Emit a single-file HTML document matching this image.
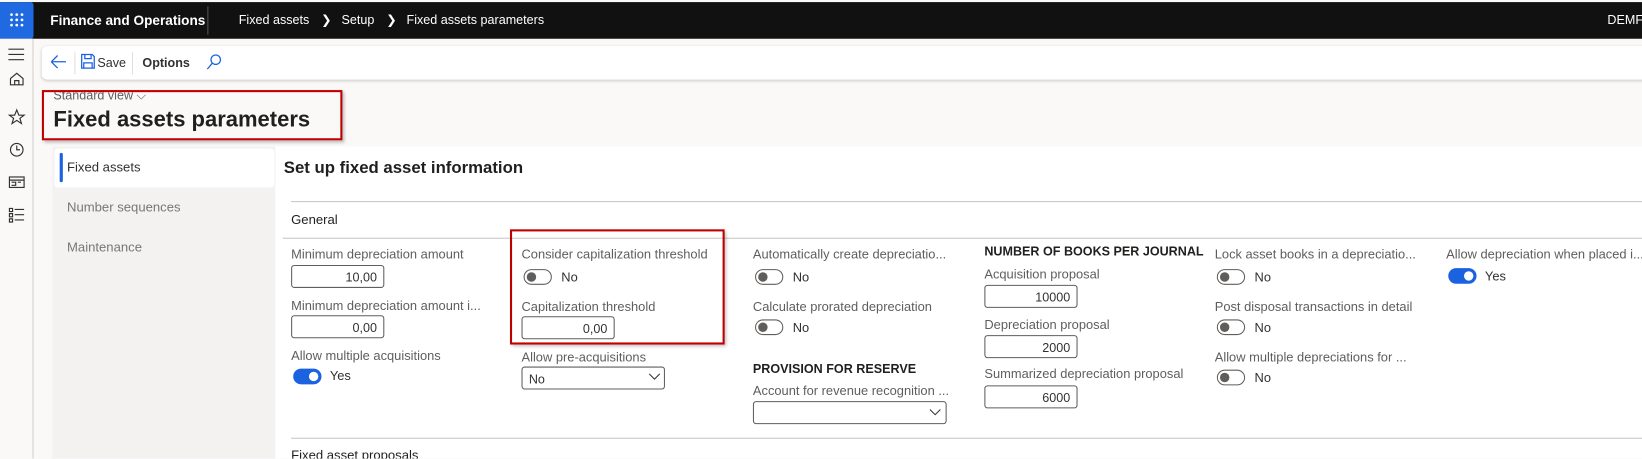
<!DOCTYPE html>
<html><head><meta charset="utf-8"><style>
*{margin:0;padding:0;box-sizing:border-box}
html,body{width:1642px;height:459px;overflow:hidden;background:#faf9f8;font-family:"Liberation Sans",sans-serif;color:#323130}
#s{position:absolute;left:0;top:0;width:1568px;height:438px;transform:scale(1.04719);transform-origin:0 0;overflow:hidden}
.a{position:absolute;white-space:nowrap}
.lbl{position:absolute;font-size:12.3px;color:#605e5c;white-space:nowrap}
.inp{position:absolute;height:22px;border:1px solid #605e5c;border-radius:3px;background:#fff;font-size:12px;text-align:right;padding:4px 6px 0 0;color:#323130}
.tg{position:absolute;width:27px;height:15px;border:1px solid #605e5c;border-radius:8px;background:#fff}
.tg:after{content:"";position:absolute;left:2px;top:2px;width:9px;height:9px;border-radius:50%;background:#605e5c}
.tg.on{background:#1a62e0;border-color:#1a62e0}
.tg.on:after{left:14px;background:#fff}
.tt{position:absolute;font-size:12.3px;color:#323130}
.line{position:absolute;height:1px;background:#c8c6c4}
</style></head><body><div id="s">
<div class="a" style="left:0;top:2px;width:1568px;height:35px;background:#111"></div>
<div class="a" style="left:0;top:2px;width:32px;height:35px;background:#1f6ae0;border-radius:0 3px 3px 0"></div>
<svg class="a" style="left:8px;top:11px" width="16" height="16"><g fill="#fff"><circle cx="3" cy="3" r="1.3"/><circle cx="8" cy="3" r="1.3"/><circle cx="13" cy="3" r="1.3"/><circle cx="3" cy="8" r="1.3"/><circle cx="8" cy="8" r="1.3"/><circle cx="13" cy="8" r="1.3"/><circle cx="3" cy="13" r="1.3"/><circle cx="8" cy="13" r="1.3"/><circle cx="13" cy="13" r="1.3"/></g></svg>
<div class="a" style="left:48px;top:12px;color:#fff;font-size:13px;font-weight:bold">Finance and Operations</div>
<div class="a" style="left:198px;top:6px;width:1px;height:27px;background:#555"></div>
<div class="a" style="left:228px;top:12px;color:#fff;font-size:12px">Fixed assets <span style="margin:0 6px 0 8px">&#x276F;</span> Setup <span style="margin:0 6px 0 8px">&#x276F;</span> Fixed assets parameters</div>
<div class="a" style="left:1535px;top:12px;color:#fff;font-size:12px">DEMF</div>
<div class="a" style="left:0;top:37px;width:32px;height:401px;background:#faf9f8;border-right:1px solid #d2d0ce"></div>
<svg class="a" style="left:0;top:37px" width="32" height="190" fill="none" stroke="#323130" stroke-width="1.1">
<path d="M8 10h15M8 15h15M8 20h15"/>
<path d="M10 44v-6l6-5 6 5v6zM14 44v-4h4v4"/>
<path d="M16 68l2 5h5l-4 3 1.5 5-4.5-3-4.5 3 1.5-5-4-3h5z"/>
<circle cx="16" cy="106" r="6"/><path d="M16 102v4h3"/>
<rect x="9" y="132" width="14" height="10"/><path d="M9 135h14M11 137h4v3h-4M17 137h3"/>
<path d="M9 162h3v3h-3zM9 167h3v3h-3zM9 172h3v3h-3zM14 163h9M14 168h9M14 173h9"/>
</svg>
<div class="a" style="left:40px;top:44px;width:1540px;height:32px;background:#fff;border-radius:5px;box-shadow:0 1px 3px rgba(0,0,0,.18)"></div>
<svg class="a" style="left:46px;top:51px" width="200" height="18" fill="none" stroke="#1a62e0" stroke-width="1.2">
<path d="M3 8h14M3 8l6-6M3 8l6 6"/>
<path d="M32 1h10l2 2v11H32zM35 1v4h6V1M34 14V9h8v5" stroke="#1a62e0"/>
<circle cx="160" cy="6" r="4.5" stroke="#1a62e0"/><path d="M157 9l-5 6"/>
</svg>
<div class="a" style="left:71px;top:50px;width:1px;height:21px;background:#e1dfdd"></div>
<div class="a" style="left:93px;top:53px;font-size:12px;color:#323130">Save</div>
<div class="a" style="left:126px;top:50px;width:1px;height:21px;background:#e1dfdd"></div>
<div class="a" style="left:136px;top:53px;font-size:12px;font-weight:bold;color:#323130">Options</div>
<div class="a" style="left:51px;top:84px;font-size:12px;color:#605e5c">Standard view &#x2335;</div>
<div class="a" style="left:51px;top:103px;font-size:21px;font-weight:bold;color:#201f1e">Fixed assets parameters</div>
<div class="a" style="left:40px;top:86px;width:287px;height:48px;border:2px solid #c00000;box-shadow:2px 2px 3px rgba(0,0,0,.25)"></div>
<div class="a" style="left:50px;top:140px;width:213px;height:300px;background:#f3f2f1"></div>
<div class="a" style="left:52px;top:142px;width:210px;height:37px;background:#fff;border-radius:3px"></div>
<div class="a" style="left:57px;top:146px;width:3px;height:28px;background:#1a62e0;border-radius:2px"></div>
<div class="a" style="left:64px;top:153px;font-size:12.5px;color:#323130">Fixed assets</div>
<div class="a" style="left:64px;top:191px;font-size:12.5px;color:#797775">Number sequences</div>
<div class="a" style="left:64px;top:229px;font-size:12.5px;color:#797775">Maintenance</div>
<div class="a" style="left:263px;top:140px;width:1305px;height:300px;background:#fff"></div>
<div class="a" style="left:271px;top:152px;font-size:16px;font-weight:bold;color:#201f1e">Set up fixed asset information</div>
<div class="line" style="left:278px;top:192px;width:1290px"></div>
<div class="a" style="left:278px;top:203px;font-size:12.5px;color:#201f1e">General</div>
<div class="line" style="left:270px;top:227px;width:1298px"></div>

<div class="lbl" style="left:278px;top:236px">Minimum depreciation amount</div>
<div class="inp" style="left:278px;top:253px;width:89px">10,00</div>
<div class="lbl" style="left:278px;top:285px">Minimum depreciation amount i...</div>
<div class="inp" style="left:278px;top:301px;width:89px">0,00</div>
<div class="lbl" style="left:278px;top:333px">Allow multiple acquisitions</div>
<div class="tg on" style="left:280px;top:352px"></div><div class="tt" style="left:315px;top:352px">Yes</div>

<div class="lbl" style="left:498px;top:236px">Consider capitalization threshold</div>
<div class="tg" style="left:500px;top:257px"></div><div class="tt" style="left:536px;top:258px">No</div>
<div class="lbl" style="left:498px;top:286px">Capitalization threshold</div>
<div class="inp" style="left:498px;top:302px;width:89px">0,00</div>
<div class="a" style="left:487px;top:219px;width:205px;height:110px;border:2px solid #c00000;box-shadow:2px 2px 3px rgba(0,0,0,.25)"></div>
<div class="lbl" style="left:498px;top:334px">Allow pre-acquisitions</div>
<div class="inp" style="left:498px;top:350px;width:137px;text-align:left;padding-left:6px">No</div>
<svg class="a" style="left:619px;top:356px" width="12" height="8"><path d="M1 1l5 5 5-5" fill="none" stroke="#323130"/></svg>

<div class="lbl" style="left:719px;top:236px">Automatically create depreciatio...</div>
<div class="tg" style="left:721px;top:257px"></div><div class="tt" style="left:757px;top:258px">No</div>
<div class="lbl" style="left:719px;top:286px">Calculate prorated depreciation</div>
<div class="tg" style="left:721px;top:305px"></div><div class="tt" style="left:757px;top:306px">No</div>
<div class="a" style="left:719px;top:345px;font-size:12px;font-weight:bold;color:#201f1e">PROVISION FOR RESERVE</div>
<div class="lbl" style="left:719px;top:366px">Account for revenue recognition ...</div>
<div class="inp" style="left:719px;top:383px;width:185px"></div>
<svg class="a" style="left:887px;top:390px" width="12" height="8"><path d="M1 1l5 5 5-5" fill="none" stroke="#323130"/></svg>

<div class="a" style="left:940px;top:233px;font-size:12px;font-weight:bold;color:#201f1e">NUMBER OF BOOKS PER JOURNAL</div>
<div class="lbl" style="left:940px;top:255px">Acquisition proposal</div>
<div class="inp" style="left:940px;top:272px;width:89px">10000</div>
<div class="lbl" style="left:940px;top:303px">Depreciation proposal</div>
<div class="inp" style="left:940px;top:320px;width:89px">2000</div>
<div class="lbl" style="left:940px;top:350px">Summarized depreciation proposal</div>
<div class="inp" style="left:940px;top:368px;width:89px">6000</div>

<div class="lbl" style="left:1160px;top:236px">Lock asset books in a depreciatio...</div>
<div class="tg" style="left:1162px;top:257px"></div><div class="tt" style="left:1198px;top:258px">No</div>
<div class="lbl" style="left:1160px;top:286px">Post disposal transactions in detail</div>
<div class="tg" style="left:1162px;top:305px"></div><div class="tt" style="left:1198px;top:306px">No</div>
<div class="lbl" style="left:1160px;top:334px">Allow multiple depreciations for ...</div>
<div class="tg" style="left:1162px;top:353px"></div><div class="tt" style="left:1198px;top:354px">No</div>

<div class="lbl" style="left:1381px;top:236px">Allow depreciation when placed i...</div>
<div class="tg on" style="left:1383px;top:256px"></div><div class="tt" style="left:1418px;top:257px">Yes</div>

<div class="line" style="left:278px;top:418px;width:1290px"></div>
<div class="a" style="left:278px;top:428px;font-size:12.5px;color:#201f1e">Fixed asset proposals</div>
</div></body></html>
